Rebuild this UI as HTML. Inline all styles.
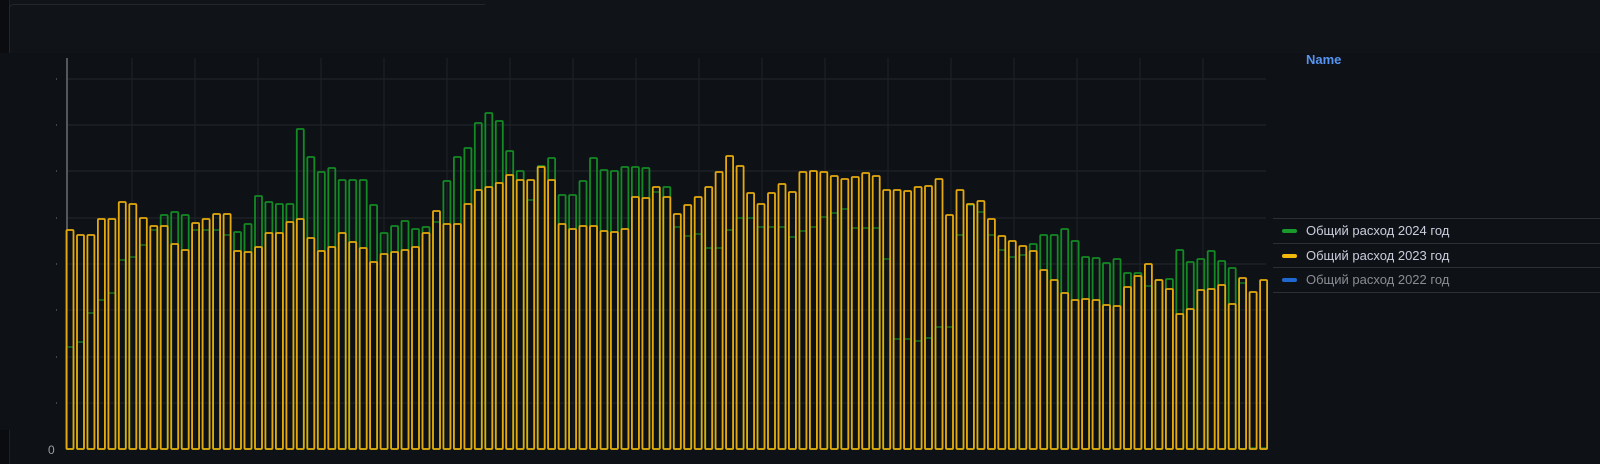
<!DOCTYPE html>
<html><head><meta charset="utf-8"><style>
html,body{margin:0;padding:0;background:#0e1217;width:1600px;height:464px;overflow:hidden;font-family:"Liberation Sans","DejaVu Sans",sans-serif}
.top{position:absolute;left:0;top:0;width:1600px;height:53px;background:#101418}
.lstrip{position:absolute;left:0;top:0;width:9px;height:53px;background:#0a0c0f;border-right:1px solid #1e2125}
.lstrip2{position:absolute;left:0;top:430px;width:9px;height:34px;background:#0a0c0f;border-right:1px solid #1e2125}
.name{position:absolute;left:1306px;top:52px;color:#5794f2;font-size:13px;font-weight:bold}
.row{position:absolute;left:1273px;width:327px;height:24px;border-top:1px solid #2c2f34;color:#ccccdc;font-size:13px}
.row span.p{position:absolute;left:9px;top:10px;width:15px;height:4px;border-radius:2px}
.row span.t{position:absolute;left:33px;top:4px}
</style></head><body>
<div class="top"></div><div class="lstrip"></div><div class="lstrip2"></div>
<svg width="1600" height="464" style="position:absolute;left:0;top:0" id="s"></svg>
<div class="name">Name</div>
<div class="row" style="top:218px"><span class="p" style="background:#1a9a2a"></span><span class="t">Общий расход 2024 год</span></div>
<div class="row" style="top:243px"><span class="p" style="background:#f2b90c"></span><span class="t">Общий расход 2023 год</span></div>
<div class="row" style="top:267px;color:#8a8d93"><span class="p" style="background:#1f68d0"></span><span class="t">Общий расход 2022 год</span></div>
<div class="row" style="top:292px;height:0"></div>
<script>
var d="230/347,235/342,235/313,219/300,219/293,202/260,204/257,218/245,226/230,226/215,244/212,250/215,223/230,219/230,214/230,214/235,251/232,252/224,247/196,233/202,233/204,222/204,219/129,238/157,251/172,247/168,233/180,242/180,248/180,262/205,254/233,252/226,250/221,247/229,233/227,211/222,224/181,224/157,204/148,190/123,187/113,183/121,175/151,180/171,180/200,167/166,180/158,224/195,229/195,226/181,226/158,231/170,232/171,229/167,197/167,198/168,187/192,197/187,214/227,205/236,197/234,187/248,172/248,156/230,166/218,193/218,204/227,193/227,184/227,192/237,172/231,171/227,172/217,176/213,179/209,177/228,173/228,176/228,190/259,190/339,191/339,187/341,186/338,179/327,215/327,190/235,204/205,201/212,219/235,236/250,241/257,246/255,251/244,270/235,280/235,293/229,300/241,299/257,300/258,305/263,306/259,287/273,276/273,264/286,280/280,289/279,314/250,309/262,290/259,289/251,285/261,304/268,278/283,292/448,280/448".split(",");
var h='';
var gy=[79,125,171,218,264,310,357,403];
gy.forEach(function(y){h+='<line x1="67" x2="1266" y1="'+y+'" y2="'+y+'" stroke="#24272b"/><line x1="56" x2="57" y1="'+y+'" y2="'+y+'" stroke="#777"/>';});
for(var x=132;x<1266;x+=63)h+='<line x1="'+x+'" x2="'+x+'" y1="58" y2="449" stroke="#202327"/>';
h+='<line x1="67" x2="67" y1="58" y2="450" stroke="#6b6e73" stroke-width="1.5"/>';
var g='',yl='';
d.forEach(function(v,i){var p=v.split("/"),yy=+p[0],gg=+p[1],x=66.5+i*10.47;
g+='<rect x="'+x.toFixed(1)+'" y="'+gg+'" width="7" height="'+(449-gg)+'" rx="1" fill="none" stroke="#138a24" stroke-width="1.8"/>';
yl+='<rect x="'+x.toFixed(1)+'" y="'+yy+'" width="7" height="'+(449-yy)+'" rx="1" fill="#0b0f1c" fill-opacity="0.3" stroke="#e5a90c" stroke-width="1.8"/>';});
h+=g+yl;
h+='<text x="48" y="454" fill="#9a9ea5" font-size="12" font-family="Liberation Sans">0</text>';
h+='<path d="M9.5 53V9Q9.5 4.5 14 4.5H485" fill="none" stroke="#23262a"/>';
document.getElementById("s").innerHTML=h;
</script>
</body></html>
